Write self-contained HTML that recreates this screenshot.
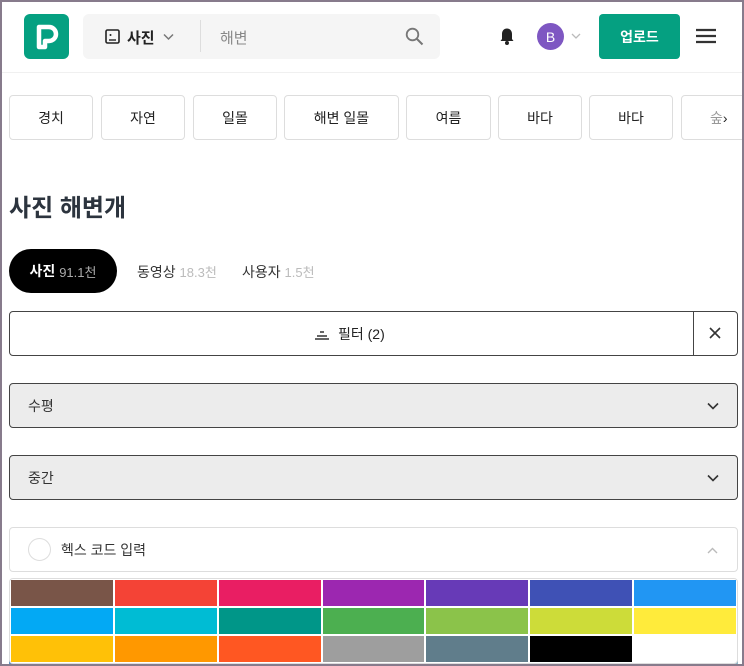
<!DOCTYPE html>
<html><head><meta charset="utf-8"><style>
*{box-sizing:border-box;margin:0;padding:0}
html,body{width:744px;height:666px;overflow:hidden;background:#fff}
body{font-family:"Liberation Sans","Noto Sans CJK KR",sans-serif;color:#2c343e;position:relative}
.frame{position:absolute;inset:0;border:2px solid #877b8c;pointer-events:none;z-index:10}
.abs{position:absolute}
.logo{left:24px;top:14px;width:45px;height:45px;background:#05a081;border-radius:6px}
.search{left:83px;top:14px;width:357px;height:45px;background:#f5f5f5;border-radius:6px}
.chip{position:absolute;top:95px;height:45px;border:1px solid #ddd;border-radius:4px;font-size:14px;display:flex;align-items:center;justify-content:center;color:#222}
.sel{position:absolute;left:9px;width:729px;height:45px;background:#ececec;border:1px solid #444;border-radius:4px;font-size:14px;display:flex;align-items:center;padding-left:18px;color:#333}
.grid{position:absolute;left:9px;top:578px;width:729px;height:86px;border:1px solid #ddd;border-radius:4px;display:grid;grid-template-columns:repeat(7,1fr);gap:2px;padding:1px;overflow:hidden}
</style></head><body>
<div class="frame"></div>
<div class="abs logo"><svg width="45" height="45" viewBox="0 0 45 45"><path d="M15 33V13h10a7 7 0 0 1 0 14h-4v6z" fill="none" stroke="#fff" stroke-width="4.5" stroke-linejoin="round"/></svg></div>
<div class="abs search">
<svg class="abs" style="left:22px;top:15px" width="15" height="15" viewBox="0 0 15 15"><rect x="1" y="1" width="13" height="13" rx="1.5" fill="none" stroke="#222" stroke-width="1.6"/><path d="M4 11h7" stroke="#222" stroke-width="1.4"/><circle cx="5.5" cy="6" r="1" fill="#222"/></svg>
<span class="abs" style="left:44px;top:13px;font-size:15px;font-weight:bold;color:#222">사진</span>
<svg class="abs" style="left:80px;top:19px" width="11" height="8" viewBox="0 0 11 8"><path d="M1 1.5l4.5 4.5 4.5-4.5" fill="none" stroke="#777" stroke-width="1.5"/></svg>
<div class="abs" style="left:117px;top:6px;width:1px;height:32px;background:#ddd"></div>
<span class="abs" style="left:137px;top:13px;font-size:15px;color:#888">해변</span>
<svg class="abs" style="left:322px;top:13px" width="19" height="19" viewBox="0 0 19 19"><circle cx="7.5" cy="7.5" r="5.8" fill="none" stroke="#777" stroke-width="1.8"/><path d="M12 12l5.5 5.5" stroke="#777" stroke-width="2"/></svg>
</div>
<svg class="abs" style="left:499px;top:27px" width="16" height="19" viewBox="0 0 16 19"><path d="M8 1.5c-3 0-5 2.3-5 5.5v5L1.5 14h13L13 12V7c0-3.2-2-5.5-5-5.5z" fill="#222"/><circle cx="8" cy="16" r="2" fill="#222"/></svg>
<div class="abs" style="left:537px;top:23px;width:27px;height:27px;border-radius:50%;background:#7e57c2;color:#fff;font-size:14px;display:flex;align-items:center;justify-content:center">B</div>
<svg class="abs" style="left:571px;top:33px" width="10" height="7" viewBox="0 0 10 7"><path d="M1 1l4 4 4-4" fill="none" stroke="#bbb" stroke-width="1.3"/></svg>
<div class="abs" style="left:599px;top:14px;width:81px;height:45px;background:#05a081;border-radius:4px;color:#fff;font-size:14px;font-weight:bold;display:flex;align-items:center;justify-content:center">업로드</div>
<svg class="abs" style="left:696px;top:28px" width="20" height="16" viewBox="0 0 20 16"><path d="M0 2h20M0 8h20M0 14h20" stroke="#333" stroke-width="2.2"/></svg>
<div class="abs" style="left:2px;top:72px;width:740px;height:1px;background:#f0f0f0"></div>
<div class="chip" style="left:9px;width:84px">경치</div>
<div class="chip" style="left:101px;width:84px">자연</div>
<div class="chip" style="left:193px;width:84px">일몰</div>
<div class="chip" style="left:284px;width:115px">해변 일몰</div>
<div class="chip" style="left:406px;width:85px">여름</div>
<div class="chip" style="left:498px;width:84px">바다</div>
<div class="chip" style="left:589px;width:84px">바다</div>
<div class="chip" style="left:681px;width:70px;justify-content:flex-start;padding-left:28px;color:#999">숲<span style="color:#222;margin-left:0">›</span></div>
<div class="abs" style="left:9px;top:188px;font-size:24px;font-weight:bold;color:#2c343e">사진 해변개</div>
<div class="abs" style="left:9px;top:249px;width:108px;height:44px;background:#000;border-radius:22px;color:#fff;font-size:14px;display:flex;align-items:center;justify-content:center"><b>사진</b>&nbsp;<span style="color:#aaa;font-size:13px">91.1천</span></div>
<div class="abs" style="left:137px;top:262px;font-size:14px;color:#333">동영상 <span style="color:#bbb;font-size:13px">18.3천</span></div>
<div class="abs" style="left:242px;top:262px;font-size:14px;color:#333">사용자 <span style="color:#bbb;font-size:13px">1.5천</span></div>
<div class="abs" style="left:9px;top:311px;width:729px;height:45px;border:1px solid #444;border-radius:4px"></div>
<div class="abs" style="left:693px;top:311px;width:1px;height:45px;background:#444"></div>
<div class="abs" style="left:314px;top:324px;font-size:14px;color:#222;display:flex;align-items:center;gap:8px"><svg width="16" height="12" viewBox="0 0 16 12"><path d="M6 4h4M3 8h10M1 11h14" stroke="#333" stroke-width="1.4"/></svg>필터 (2)</div>
<svg class="abs" style="left:709px;top:327px" width="12" height="12" viewBox="0 0 12 12"><path d="M1 1l10 10M11 1L1 11" stroke="#333" stroke-width="1.6"/></svg>
<div class="sel" style="top:383px">수평</div>
<div class="sel" style="top:455px">중간</div>
<svg class="abs" style="left:707px;top:402px" width="12" height="8" viewBox="0 0 12 8"><path d="M1 1.5l5 5 5-5" fill="none" stroke="#333" stroke-width="1.6"/></svg>
<svg class="abs" style="left:707px;top:474px" width="12" height="8" viewBox="0 0 12 8"><path d="M1 1.5l5 5 5-5" fill="none" stroke="#333" stroke-width="1.6"/></svg>
<div class="abs" style="left:9px;top:527px;width:729px;height:45px;border:1px solid #ddd;border-radius:4px"></div>
<div class="abs" style="left:28px;top:538px;width:23px;height:23px;border-radius:50%;border:1px solid #ddd"></div>
<div class="abs" style="left:61px;top:540px;font-size:14px;color:#333">헥스 코드 입력</div>
<svg class="abs" style="left:707px;top:547px" width="11" height="7" viewBox="0 0 11 7"><path d="M1 6l4.5-4.5L10 6" fill="none" stroke="#bbb" stroke-width="1.4"/></svg>
<div class="abs" style="left:9px;top:660px;width:729px;height:6px;background:linear-gradient(90deg,#5a8fc0,#9cc3e0 30%,#6b6a50 35%,#bcd8e8 45%,#4aa0b0 60%,#80c0d0 85%,#333 92%,#90b8c8)"></div>
<div class="grid" style="background:#fff">
<div style="background:#795548"></div><div style="background:#f44336"></div><div style="background:#e91e63"></div><div style="background:#9c27b0"></div><div style="background:#673ab7"></div><div style="background:#3f51b5"></div><div style="background:#2196f3"></div>
<div style="background:#03a9f4"></div><div style="background:#00bcd4"></div><div style="background:#009688"></div><div style="background:#4caf50"></div><div style="background:#8bc34a"></div><div style="background:#cddc39"></div><div style="background:#ffeb3b"></div>
<div style="background:#ffc107"></div><div style="background:#ff9800"></div><div style="background:#ff5722"></div><div style="background:#9e9e9e"></div><div style="background:#607d8b"></div><div style="background:#000"></div><div style="background:#fff"></div>
</div>
</body></html>
